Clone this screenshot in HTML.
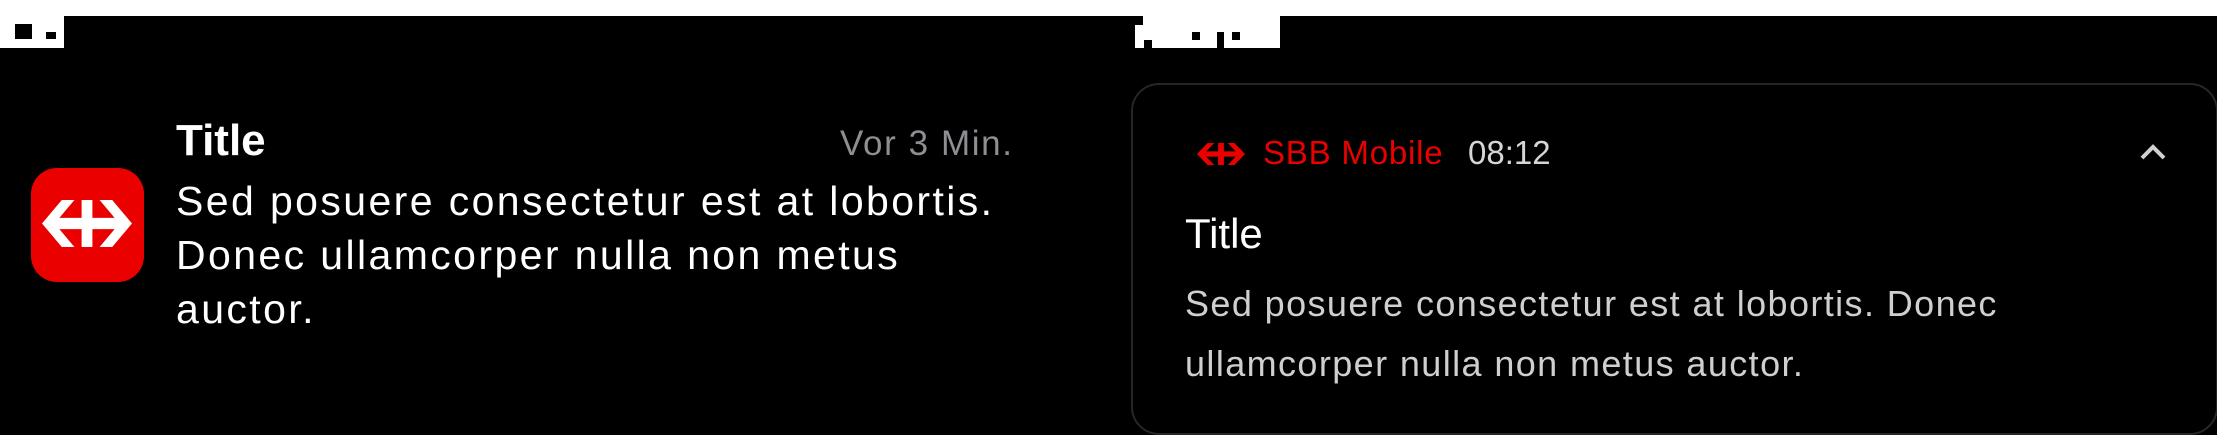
<!DOCTYPE html>
<html><head><meta charset="utf-8"><style>
html,body{margin:0;padding:0;}
body{width:2217px;height:435px;background:#000;position:relative;overflow:hidden;font-family:"Liberation Sans",Arial,sans-serif;}
.a{position:absolute;}
.w{background:#fff;}
.k{background:#000;}
.t{position:absolute;white-space:nowrap;}
</style></head><body>
<div class="a w" style="left:0;top:0;width:2217px;height:16px"></div>
<div class="a w" style="left:0;top:16px;width:64px;height:32px"></div>
<div class="a k" style="left:15px;top:24px;width:17px;height:15px"></div>
<div class="a k" style="left:46px;top:32px;width:10px;height:7px"></div>
<div class="a w" style="left:1135px;top:16px;width:145px;height:32px"></div>
<div class="a k" style="left:1135px;top:16px;width:8px;height:9px"></div>
<div class="a k" style="left:1144px;top:40px;width:8px;height:8px"></div>
<div class="a k" style="left:1192px;top:32px;width:8px;height:8px"></div>
<div class="a k" style="left:1217px;top:32px;width:7px;height:16px"></div>
<div class="a k" style="left:1232px;top:32px;width:8px;height:8px"></div>

<!-- left iOS notification -->
<div class="a" style="left:31px;top:168px;width:113px;height:114px;background:#eb0000;border-radius:26px"></div>
<svg class="a" style="left:42px;top:200px" width="90" height="47" viewBox="0 0 100 50" preserveAspectRatio="none">
<g fill="#fff"><polygon points="22,0 36,0 19.3,19 19.3,31 36,50 22,50 0,25"/><polygon points="78,0 64,0 80.7,19 80.7,31 64,50 78,50 100,25"/><rect x="19" y="19" width="62" height="12"/><rect x="44" y="0" width="12" height="50"/></g></svg>
<div class="t" style="left:176px;top:116px;font-size:44px;line-height:50px;font-weight:bold;color:#fff">Title</div>
<div class="t" style="left:840px;top:124px;font-size:35px;line-height:40px;letter-spacing:1.6px;color:#8e8e93">Vor 3 Min.</div>
<div class="t" style="left:176px;top:174px;font-size:41px;line-height:54px;letter-spacing:2.4px;color:#fff">Sed posuere consectetur est at lobortis.<br>Donec ullamcorper nulla non metus<br>auctor.</div>

<!-- right Android notification -->
<div class="a" style="left:1131px;top:83px;width:1083px;height:348px;border:2px solid #262626;border-radius:28px;background:#000"></div>
<svg class="a" style="left:1197px;top:143px" width="48" height="22" viewBox="0 0 100 50" preserveAspectRatio="none">
<g fill="#eb0000"><polygon points="22,0 36,0 19.3,19 19.3,31 36,50 22,50 0,25"/><polygon points="78,0 64,0 80.7,19 80.7,31 64,50 78,50 100,25"/><rect x="19" y="19" width="62" height="12"/><rect x="44" y="0" width="12" height="50"/></g></svg>
<div class="t" style="left:1263px;top:134px;font-size:33px;line-height:38px;letter-spacing:0.8px;color:#eb0000">SBB Mobile</div>
<div class="t" style="left:1468px;top:134px;font-size:33px;line-height:38px;color:#d6d6d6">08:12</div>
<svg class="a" style="left:2138px;top:142px" width="30" height="20" viewBox="0 0 30 20"><polyline points="4,16 15,5 26,16" fill="none" stroke="#d0d0d0" stroke-width="4"/></svg>
<div class="t" style="left:1185px;top:210px;font-size:42px;line-height:48px;color:#fff">Title</div>
<div class="t" style="left:1185px;top:274px;font-size:36px;line-height:60px;letter-spacing:1.4px;color:#cfcfcf">Sed posuere consectetur est at lobortis. Donec<br>ullamcorper nulla non metus auctor.</div>
</body></html>
